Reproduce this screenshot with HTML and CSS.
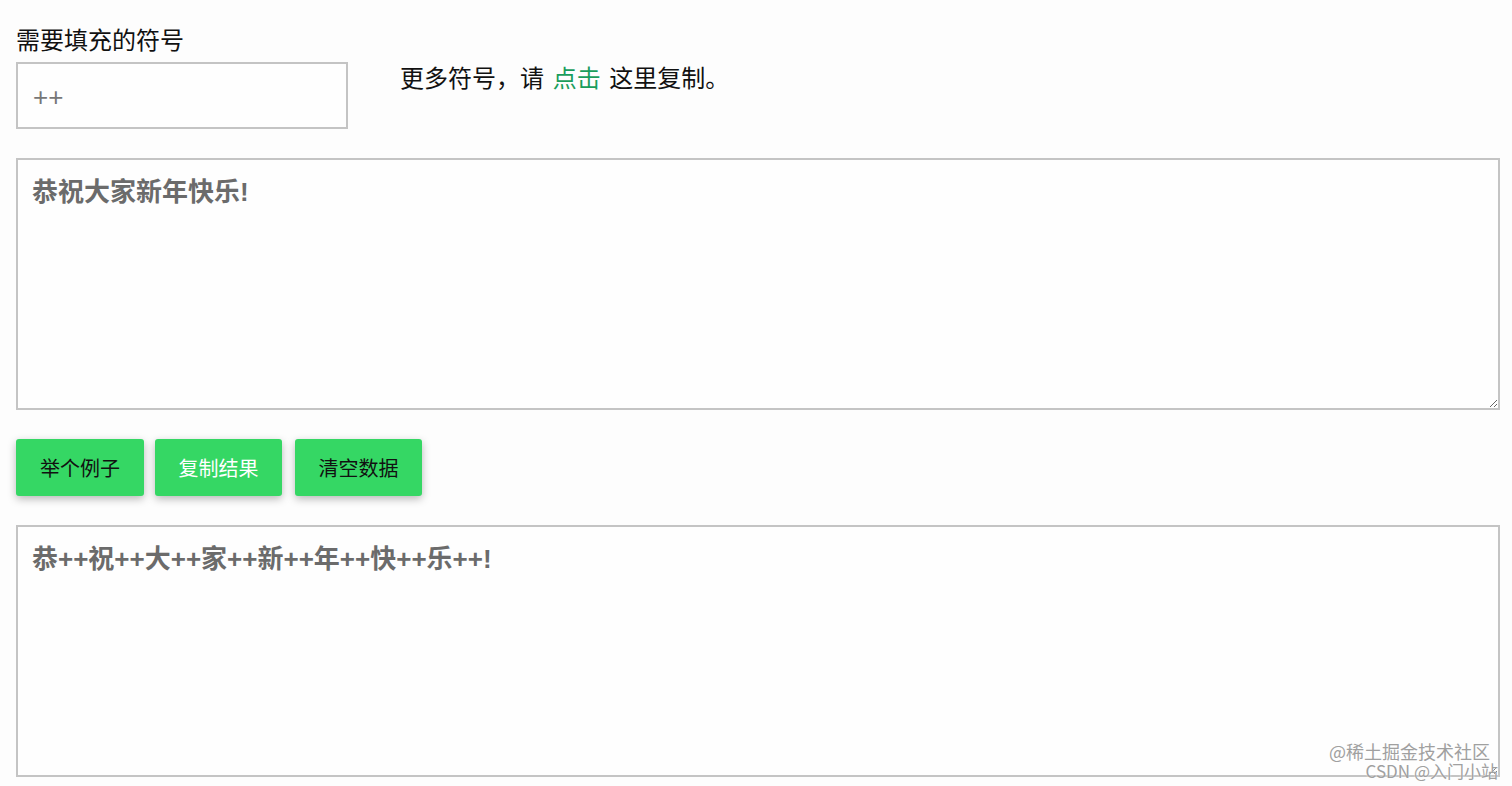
FILE: index.html
```html
<!DOCTYPE html>
<html lang="zh">
<head>
<meta charset="utf-8">
<title>符号填充</title>
<link rel="stylesheet" href="styles.css">
</head>
<body>
<div class="page">
  <div class="top-row">
    <div class="field">
      <div class="label">需要填充的符号</div>
      <input class="symbol-input" type="text" value="++">
    </div>
    <div class="more">更多符号，请 <a class="link" href="#">点击</a> 这里复制。</div>
  </div>
  <textarea class="box">恭祝大家新年快乐!</textarea>
  <div class="buttons">
    <button class="btn btn-first">举个例子</button>
    <button class="btn btn-white">复制结果</button>
    <button class="btn btn-last">清空数据</button>
  </div>
  <textarea class="box">恭++祝++大++家++新++年++快++乐++!</textarea>
</div>
<div class="watermark">
  <div class="wm-line1">@稀土掘金技术社区</div>
  <div class="wm-line2">CSDN @入门小站</div>
</div>
</body>
</html>
```

FILE: styles.css
```css
* { box-sizing: border-box; }
html, body {
  margin: 0;
  padding: 0;
  background: #fdfdfd;
}
body {
  font-family: "Liberation Sans", "Noto Sans CJK SC", sans-serif;
  color: #111;
  width: 1512px;
  height: 786px;
  overflow: hidden;
  position: relative;
}
.page {
  padding: 22px 13px 0 16px;
  display: flex;
  flex-direction: column;
}
.top-row {
  display: flex;
  align-items: flex-start;
}
.field {
  display: flex;
  flex-direction: column;
}
.label {
  font-family: "Noto Sans CJK SC", sans-serif;
  font-size: 24px;
  line-height: 34px;
  height: 40px;
  color: #111;
}
.symbol-input {
  width: 332px;
  height: 67px;
  border: 2px solid #c4c4c4;
  background: #fefefe;
  padding: 4px 14px 0 15px;
  font-family: "Liberation Sans", "Noto Sans CJK SC", sans-serif;
  font-size: 26px;
  color: #777;
  outline: none;
}
.more {
  margin-left: 52px;
  margin-top: 40px;
  font-family: "Liberation Sans", "Noto Sans CJK SC", sans-serif;
  font-size: 24px;
  line-height: 34px;
  word-spacing: 2px;
  color: #111;
}
.link {
  color: #1a9d5c;
  text-decoration: none;
}
.box {
  display: block;
  width: 1484px;
  height: 252px;
  margin-top: 29px;
  border: 2px solid #c4c4c4;
  background: #fefefe;
  padding: 13px 14px;
  font-family: "Liberation Sans", "Noto Sans CJK SC", sans-serif;
  font-size: 26px;
  font-weight: 700;
  line-height: 38px;
  color: #6b6b6b;
  outline: none;
}
.buttons {
  display: flex;
  margin-top: 29px;
}
.btn {
  width: 127px;
  height: 57px;
  margin-right: 12px;
  border: none;
  border-radius: 3px;
  background: #35d764;
  color: #111;
  font-family: "Noto Sans CJK SC", sans-serif;
  font-size: 20px;
  box-shadow: 0 3px 8px rgba(0, 0, 0, 0.28);
  cursor: pointer;
}
.btn-first { width: 128px; margin-right: 11px; }
.btn-last { margin-right: 0; }
.btn-white { color: #fff; margin-right: 13px; }
.watermark {
  position: absolute;
  right: 14px;
  top: 742px;
  text-align: right;
  color: #a0a0a0;
  font-family: "Noto Sans CJK SC", sans-serif;
  font-size: 18px;
  line-height: 19px;
  text-shadow: 0 0 2px #fff;
  pointer-events: none;
}
.wm-line1 { margin-right: 8px; }
.wm-line2 { font-size: 17px; }
```
